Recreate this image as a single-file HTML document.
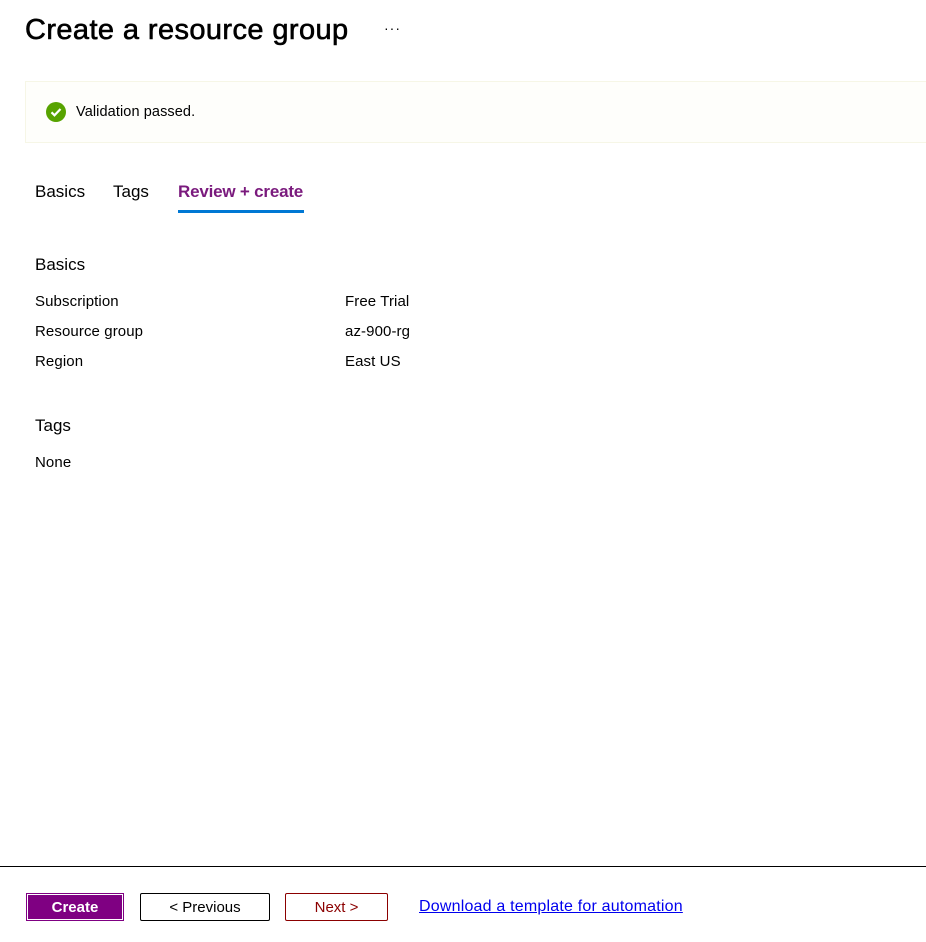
<!DOCTYPE html>
<html><head><style>
body{margin:0;width:926px;height:942px;background:#fff;font-family:"Liberation Sans",sans-serif;color:#000;position:relative;overflow:hidden}
.a{position:absolute;white-space:nowrap}
h1{position:absolute;left:25px;top:14px;margin:0;font-size:29px;font-weight:400;letter-spacing:0.4px;-webkit-text-stroke:0.6px #000}
.t{font-size:15px;letter-spacing:0.1px}
.btn{position:absolute;top:893px;height:28px;box-sizing:border-box;font-size:15px;display:flex;align-items:center;justify-content:center;font-weight:600}
</style></head><body>
<h1>Create a resource group</h1>
<div class="a" style="left:384px;top:20px;font-size:14px;letter-spacing:1px">···</div>
<div class="a" style="left:25px;top:81px;width:920px;height:62px;border:1px solid #f6f6e6;background:#fefefb;box-sizing:border-box"></div>
<svg class="a" style="left:46px;top:102px" width="20" height="20" viewBox="0 0 20 20"><circle cx="10" cy="10" r="10" fill="#57a300"/><path d="M5.5 10.3l3 3 6-6.3" stroke="#fff" stroke-width="2.2" fill="none"/></svg>
<div class="a t" style="left:76px;top:104px;font-size:14.5px">Validation passed.</div>
<div class="a" style="left:35px;top:182px;font-size:17px">Basics</div>
<div class="a" style="left:113px;top:182px;font-size:17px">Tags</div>
<div class="a" style="left:178px;top:182px;font-size:17px;color:#7a1a7d;font-weight:600;letter-spacing:-0.2px">Review + create</div>
<div class="a" style="left:178px;top:210px;width:126px;height:3px;background:#0078d4"></div>
<div class="a" style="left:35px;top:255px;font-size:17px">Basics</div>
<div class="a t" style="left:35px;top:293px">Subscription</div>
<div class="a t" style="left:345px;top:293px">Free Trial</div>
<div class="a t" style="left:35px;top:323px">Resource group</div>
<div class="a t" style="left:345px;top:323px">az-900-rg</div>
<div class="a t" style="left:35px;top:353px">Region</div>
<div class="a t" style="left:345px;top:353px">East US</div>
<div class="a" style="left:35px;top:416px;font-size:17px">Tags</div>
<div class="a t" style="left:35px;top:454px">None</div>
<div class="a" style="left:0;top:866px;width:926px;height:1px;background:#000"></div>
<div class="btn" style="left:26px;width:98px;background:#7f0082;color:#fff;border:1px solid #7f0082;box-shadow:inset 0 0 0 1px #fff">Create</div>
<div class="btn" style="left:140px;width:130px;border:1px solid #000;border-radius:2px;font-weight:400">&lt; Previous</div>
<div class="btn" style="left:285px;width:103px;border:1px solid #8b0000;color:#8b0000;border-radius:2px;font-weight:400">Next &gt;</div>
<div class="a" style="left:419px;top:898px;font-size:16px;letter-spacing:0.2px;color:#0000ee;text-decoration:underline">Download a template for automation</div>
</body></html>
